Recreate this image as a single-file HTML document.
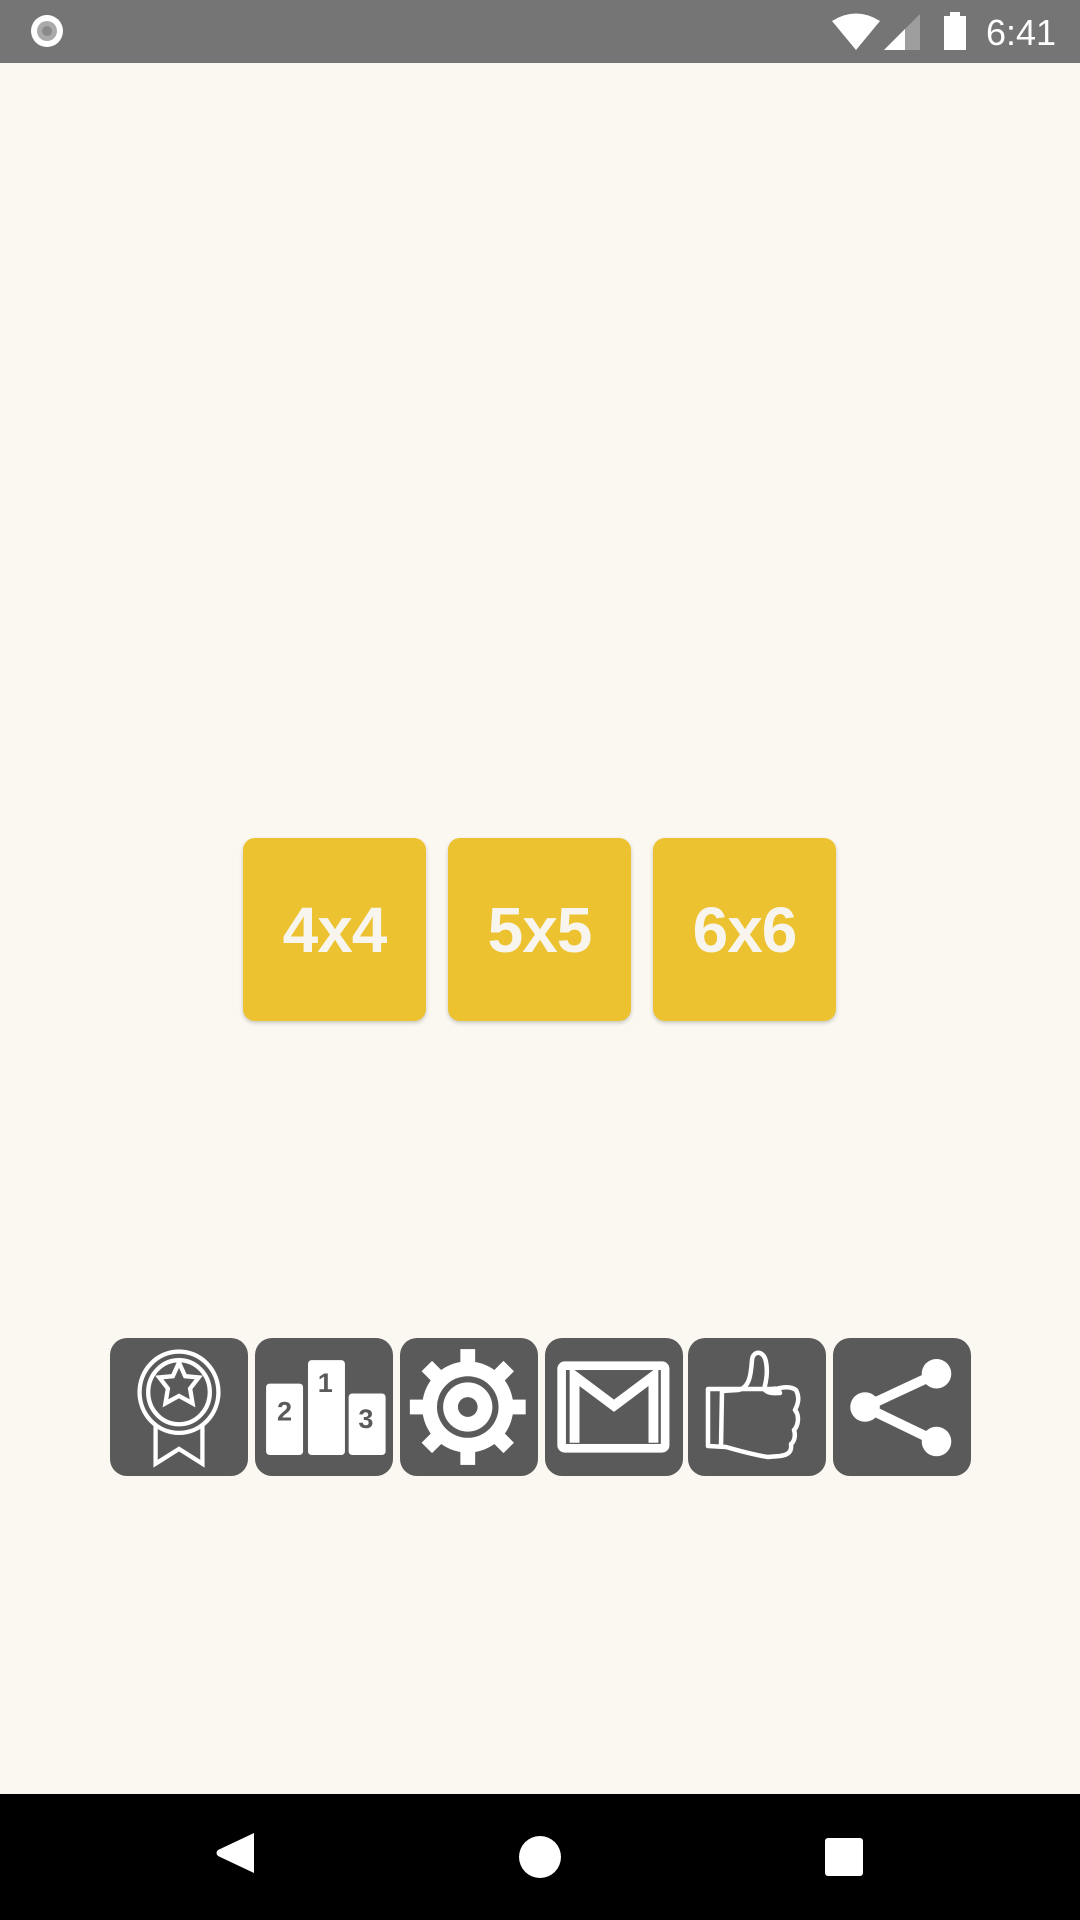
<!DOCTYPE html>
<html><head><meta charset="utf-8"><style>
html,body{margin:0;padding:0;width:1080px;height:1920px;background:#faf8f0;overflow:hidden;font-family:"Liberation Sans",sans-serif;position:relative}
.status{position:absolute;left:0;top:0;width:1080px;height:63px;background:#757575}
.nav{position:absolute;left:0;top:1794px;width:1080px;height:126px;background:#000}
.btn{position:absolute;top:838px;width:183px;height:183px;background:#ecc230;border-radius:12px;box-shadow:0 2px 4px rgba(0,0,0,.2);color:#f8f5ee;font-weight:bold;font-size:64px;display:flex;align-items:center;justify-content:center;letter-spacing:-1px}
.ic{position:absolute;top:1338px;width:138px;height:138px;background:#5a5a5a;border-radius:17px}
.ic svg{width:138px;height:138px;display:block}
</style></head><body>
<div class="status">
<svg width="1080" height="63" style="position:absolute;left:0;top:0">
<circle cx="47" cy="31" r="16" fill="#fff"/><circle cx="47" cy="31" r="10" fill="#aaa"/><circle cx="47" cy="31" r="5" fill="#8a8a8a"/>
<path d="M832,21 Q856,6 880,21 L856,50 Z" fill="#fff"/>
<path d="M884,50 L920,14 L920,50 Z" fill="#9e9e9e"/><path d="M884,50 L905,29 L905,50 Z" fill="#fff"/>
<rect x="944" y="16" width="22" height="34" fill="#fff"/><rect x="950" y="12" width="10" height="5" fill="#fff"/>
<text x="986" y="45" fill="#fff" font-size="36" font-family="Liberation Sans">6:41</text>
</svg></div>

<div class="btn" style="left:243px">4x4</div>
<div class="btn" style="left:448px">5x5</div>
<div class="btn" style="left:653px">6x6</div>

<div class="ic" style="left:110px"><svg viewBox="0 0 112 112" fill="none" stroke="#fff" stroke-width="3.5">
<ellipse cx="56" cy="44" rx="32" ry="33"/><ellipse cx="56" cy="44" rx="25" ry="26"/>
<path d="M56,20 L61,31 L72,32 L65,41 L67,53 L56,47 L45,53 L47,41 L40,32 L51,31 Z"/>
<path d="M37,70 L37,102 L56,90 L75,102 L75,70"/></svg></div>

<div class="ic" style="left:255px"><svg viewBox="0 0 112 112">
<rect x="9" y="37" width="30" height="58" rx="3" fill="#fff"/><rect x="43" y="18" width="30" height="77" rx="3" fill="#fff"/><rect x="76" y="45" width="30" height="50" rx="3" fill="#fff"/>
<text x="24" y="67" fill="#5a5a5a" font-size="22" font-weight="bold" text-anchor="middle">2</text>
<text x="57" y="44" fill="#5a5a5a" font-size="22" font-weight="bold" text-anchor="middle">1</text>
<text x="90" y="73" fill="#5a5a5a" font-size="22" font-weight="bold" text-anchor="middle">3</text></svg></div>

<div class="ic" style="left:400px"><svg viewBox="0 0 112 112">
<g fill="#fff" transform="translate(55,56)">
<rect x="-6" y="-47" width="12" height="94"/><rect x="-6" y="-47" width="12" height="94" transform="rotate(45)"/><rect x="-6" y="-47" width="12" height="94" transform="rotate(90)"/><rect x="-6" y="-47" width="12" height="94" transform="rotate(135)"/>
<circle r="37"/></g>
<circle cx="55" cy="56" r="25" fill="#5a5a5a"/><circle cx="55" cy="56" r="20" fill="#fff"/><circle cx="55" cy="56" r="8" fill="#5a5a5a"/></svg></div>

<div class="ic" style="left:545px"><svg viewBox="0 0 112 112">
<rect x="10" y="19" width="91" height="74" rx="6" fill="#fff"/><rect x="17" y="26" width="77" height="60" fill="#5a5a5a"/>
<path d="M24,85 L24,31 L56,55 L88,31 L88,85" fill="none" stroke="#fff" stroke-width="8"/></svg></div>

<div class="ic" style="left:688px"><svg viewBox="0 0 138 138" fill="none" stroke="#fff" stroke-width="4.5" stroke-linejoin="round">
<path d="M34,53 L50,52 C62,50 63,35 64,22 C65,12 76,12 78,24 C80,34 78,45 76,51 C80,56 86,55 92,55 C90,49 84,50 82,53 M76,51 L88,51 C98,48 104,49 108,52 C112,60 110,66 107,72 C112,78 110,88 106,92 C108,98 106,104 103,106 C104,114 100,117 92,118 L80,119 C66,117 52,113 38,109 L20,108 L20,51 Z M34,52 L33,109"/></svg></div>

<div class="ic" style="left:833px"><svg viewBox="0 0 112 112">
<path d="M84,29 L26,56 L84,84" fill="none" stroke="#fff" stroke-width="8"/>
<circle cx="84" cy="29" r="12" fill="#fff"/><circle cx="26" cy="56" r="12" fill="#fff"/><circle cx="84" cy="84" r="12" fill="#fff"/></svg></div>

<div class="nav"><svg width="1080" height="126">
<path d="M254,39 L254,79 L218,62 Q215,59 218,56 Z" fill="#fff"/>
<circle cx="540" cy="63" r="21" fill="#fff"/>
<rect x="825" y="44" width="38" height="38" rx="3" fill="#fff"/></svg></div>
</body></html>
